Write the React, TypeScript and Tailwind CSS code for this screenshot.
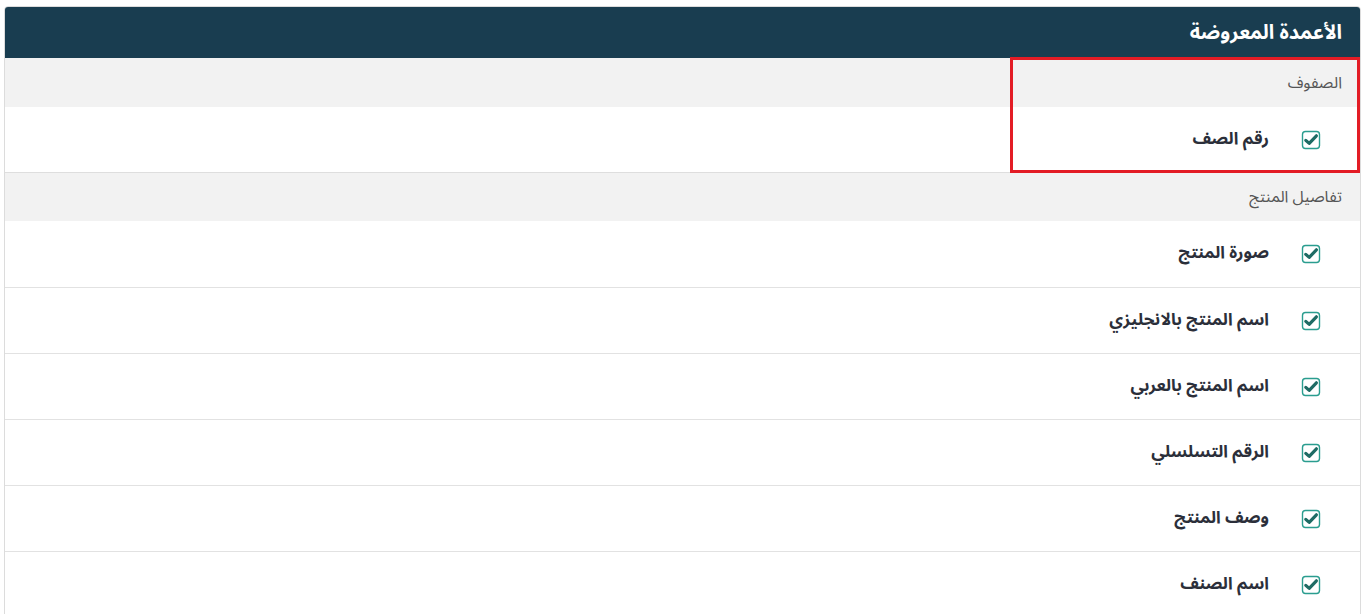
import React from "react";

type Section = { title: string; items: string[] };

const SECTIONS: Section[] = [
  { title: "الصفوف", items: ["رقم الصف"] },
  {
    title: "تفاصيل المنتج",
    items: [
      "صورة المنتج",
      "اسم المنتج بالانجليزي",
      "اسم المنتج بالعربي",
      "الرقم التسلسلي",
      "وصف المنتج",
      "اسم الصنف",
    ],
  },
];

function CheckIcon() {
  return (
    <svg width="20" height="20" viewBox="0 0 20 20" className="shrink-0">
      <rect x="1.5" y="1.5" width="17" height="17" rx="3" fill="#fff" stroke="#2a9d8f" strokeWidth="1.4" />
      <path d="M4.8 10.4 L8.2 13.4 L15.4 5.8" fill="none" stroke="#1e6b64" strokeWidth="3.2" strokeLinecap="round" strokeLinejoin="round" />
    </svg>
  );
}

export default function App() {
  const font = { fontFamily: '"Noto Sans Arabic", "DejaVu Sans", "Noto Sans", sans-serif' };

  return (
    <div className="min-h-screen bg-white pt-[6px] pl-[4px] pr-[2px]" style={font}>
      <div dir="rtl" className="relative rounded-t-[4px] border border-[#dcdcdc] overflow-hidden">
        <div className="h-[51px] bg-[#193d50] flex items-center pr-[18px]">
          <h2 className="text-[20px] font-bold text-white">الأعمدة المعروضة</h2>
        </div>

        {SECTIONS.map((s, si) => (
          <div key={si}>
            <div className={`h-[49px] bg-[#f2f2f2] flex items-center pr-[18px] ${si > 0 ? "border-t border-[#dedede]" : ""}`}>
              <span className="text-[16px] text-[#555]">{s.title}</span>
            </div>
            {s.items.map((it, ii) => (
              <div
                key={ii}
                className={`${si === 0 ? "h-[65px]" : "h-[66px]"} bg-white flex items-center gap-[32px] pr-[39px] ${ii > 0 ? "border-t border-[#e2e2e2]" : ""}`}
              >
                <CheckIcon />
                <span className="text-[17px] font-bold text-[#2b2f3a]">{it}</span>
              </div>
            ))}
          </div>
        ))}

        <div className="absolute top-[50px] right-0 w-[350px] h-[116px] border-[3px] border-[#e31c25]" />
      </div>
    </div>
  );
}
